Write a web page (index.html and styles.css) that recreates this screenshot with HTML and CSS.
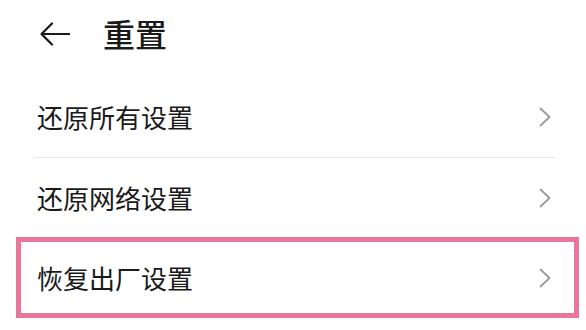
FILE: index.html
```html
<!DOCTYPE html>
<html lang="zh-CN">
<head>
<meta charset="utf-8">
<title>重置</title>
<link rel="stylesheet" href="styles.css">
</head>
<body>
<div class="page">
  <header class="header">
    <svg class="back" width="30" height="24" viewBox="0 0 30 24" aria-hidden="true">
      <path d="M12 1.5 L1.5 12 L12 22.5 M1.5 12 H30" fill="none" stroke="#1a1a1a" stroke-width="2.2" stroke-linecap="round" stroke-linejoin="round"/>
    </svg>
    <h1 class="title">重置</h1>
  </header>
  <ul class="list">
    <li class="row">
      <span class="label">还原所有设置</span>
      <svg class="chev" width="12" height="20" viewBox="0 0 12 20" aria-hidden="true"><path d="M1.5 1.5 L10.5 10 L1.5 18.5" fill="none" stroke="#9a9a9a" stroke-width="1.8" stroke-linecap="round" stroke-linejoin="round"/></svg>
    </li>
    <li class="sep"></li>
    <li class="row">
      <span class="label">还原网络设置</span>
      <svg class="chev" width="12" height="20" viewBox="0 0 12 20" aria-hidden="true"><path d="M1.5 1.5 L10.5 10 L1.5 18.5" fill="none" stroke="#9a9a9a" stroke-width="1.8" stroke-linecap="round" stroke-linejoin="round"/></svg>
    </li>
    <li class="row highlighted">
      <span class="label">恢复出厂设置</span>
      <svg class="chev" width="12" height="20" viewBox="0 0 12 20" aria-hidden="true"><path d="M1.5 1.5 L10.5 10 L1.5 18.5" fill="none" stroke="#9a9a9a" stroke-width="1.8" stroke-linecap="round" stroke-linejoin="round"/></svg>
      <span class="mark"></span>
    </li>
  </ul>
</div>
</body>
</html>
```
FILE: styles.css
```css
html, body {
  margin: 0;
  padding: 0;
  background: #ffffff;
}
body {
  font-family: "Noto Sans CJK SC", "Noto Sans", sans-serif;
  color: #1a1a1a;
  width: 586px;
  height: 330px;
  overflow: hidden;
}
.page {
  display: flex;
  flex-direction: column;
}
.header {
  height: 66px;
  display: flex;
  align-items: center;
  padding-left: 40px;
  gap: 33px;
}
.back {
  display: block;
  margin-top: 2px;
}
.title {
  margin: 0;
  font-size: 32px;
  font-weight: 500;
  line-height: 1;
  letter-spacing: 0;
}
.list {
  list-style: none;
  margin: 11px 31px 0 35px;
  padding: 0;
}
.row {
  position: relative;
  height: 80px;
  display: flex;
  align-items: center;
  justify-content: space-between;
  padding: 0 4px 0 2px;
}
.label {
  font-size: 26px;
  line-height: 1;
  font-weight: 400;
}
.chev {
  display: block;
}
.sep {
  height: 1px;
  background: #e6e6e6;
}
.mark {
  position: absolute;
  left: -19px;
  right: -24px;
  top: -1px;
  bottom: 0;
  border: 5px solid #e9779a;
  pointer-events: none;
}
```
